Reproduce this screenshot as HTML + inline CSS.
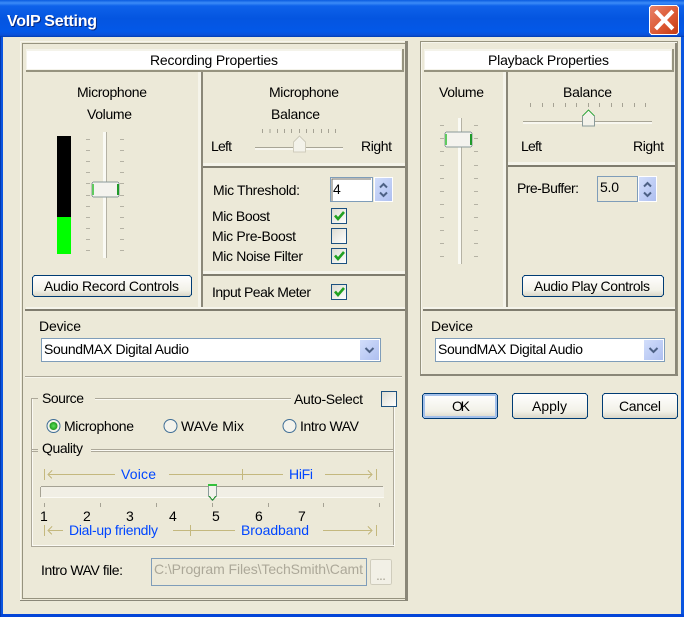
<!DOCTYPE html>
<html><head><meta charset="utf-8"><title>VoIP Setting</title>
<style>
html,body{margin:0;padding:0;background:#ece9d8;width:684px;height:617px;overflow:hidden}
svg{display:block}
text{font-family:"Liberation Sans",sans-serif;font-size:14px;fill:#000}
.b{fill:#0046ff}
.g{fill:#aca899}
</style></head><body>
<svg width="684" height="617" viewBox="0 0 684 617" xmlns="http://www.w3.org/2000/svg" shape-rendering="crispEdges">
<defs>
<linearGradient id="tb" x1="0" y1="0" x2="0" y2="1">
<stop offset="0" stop-color="#0a5be0"/><stop offset=".08" stop-color="#3c8cf8"/><stop offset=".16" stop-color="#0e62ea"/><stop offset=".5" stop-color="#0455e0"/><stop offset=".85" stop-color="#0358e8"/><stop offset=".95" stop-color="#0a50d8"/><stop offset="1" stop-color="#003cb0"/>
</linearGradient>
<linearGradient id="cb" x1="0" y1="0" x2="1" y2="1"><stop offset="0" stop-color="#dcdbd0"/><stop offset="1" stop-color="#fff"/></linearGradient>
<linearGradient id="btn" x1="0" y1="0" x2="0" y2="1"><stop offset="0" stop-color="#fff"/><stop offset=".7" stop-color="#f2f1e8"/><stop offset="1" stop-color="#d8d5c6"/></linearGradient>
<linearGradient id="sp" x1="0" y1="0" x2="1" y2="1"><stop offset="0" stop-color="#d2defb"/><stop offset="1" stop-color="#aebff0"/></linearGradient>
<linearGradient id="cl" x1="0" y1="0" x2="1" y2="1"><stop offset="0" stop-color="#e8836a"/><stop offset=".6" stop-color="#db5630"/><stop offset="1" stop-color="#c23a12"/></linearGradient>
<radialGradient id="rd"><stop offset="0" stop-color="#5ee05e"/><stop offset="1" stop-color="#1c9a1c"/></radialGradient>
</defs>

<!-- window -->
<rect width="684" height="617" fill="#ece9d8"/>
<rect width="684" height="37" fill="url(#tb)"/>
<rect x="0" y="37" width="3" height="580" fill="#0a55e0"/>
<rect x="681" y="37" width="3" height="580" fill="#0a55e0"/>
<rect x="0" y="614" width="684" height="3" fill="#0345d8"/>
<rect x="0" y="37" width="1" height="580" fill="#0339b0"/>
<text x="8" y="27" textLength="90" style="font-size:16px;font-weight:bold;fill:#0a2a80">VoIP Setting</text>
<text x="7" y="26" textLength="90" style="font-size:16px;font-weight:bold;fill:#fff">VoIP Setting</text>

<!-- close -->
<rect x="649.500" y="5.500" width="29" height="29" rx="3" fill="url(#cl)" stroke="#fff"/>
<path d="M657 12.500 L671.500 27.500 M671.500 12.500 L657 27.500" stroke="#fff" stroke-width="4" stroke-linecap="square" shape-rendering="auto"/>

<!-- left panel frame -->
<rect x="20.500" y="41.500" width="387" height="559" fill="none" stroke="#f6f5ec"/>
<rect x="22.500" y="43.500" width="383" height="555" fill="none" stroke="#96937f" stroke-width="1"/>
<rect x="405" y="41" width="3" height="560" fill="#8a8778"/>
<rect x="20" y="600" width="388" height="1" fill="#8a8778"/>
<!-- title box -->
<rect x="26" y="49" width="378" height="23" fill="#96937f"/>
<rect x="26" y="49" width="376" height="21" fill="#f4f3ea"/>
<rect x="27" y="51" width="374" height="18" fill="#fff"/>
<text x="150" y="65" textLength="128">Recording Properties</text>

<!-- left inner dividers -->
<rect x="198" y="72" width="3" height="235" fill="#f5f4ea"/>
<rect x="201" y="72" width="2" height="236" fill="#8a8778"/>
<rect x="203" y="163" width="202" height="3" fill="#f5f4ea"/>
<rect x="203" y="166" width="202" height="2" fill="#7f7c6e"/>
<rect x="203" y="271" width="202" height="3" fill="#f5f4ea"/>
<rect x="203" y="274" width="202" height="2" fill="#7f7c6e"/>
<rect x="26" y="307" width="379" height="2" fill="#f5f4ea"/>
<rect x="25" y="309" width="380" height="2" fill="#7f7c6e"/>

<text x="77" y="97" textLength="70">Microphone</text>
<text x="87" y="119" textLength="45">Volume</text>
<!-- meter -->
<rect x="57" y="136" width="14" height="81" fill="#000"/>
<rect x="57" y="217" width="14" height="37" fill="#00ff00"/>
<!-- vertical slider -->
<rect x="103" y="132" width="3" height="126" fill="#fafaf4"/>
<rect x="106" y="132" width="1" height="126" fill="#b5b2a4"/>
<path d="M86 139.500h4M86 150.500h4M86 161.500h4M86 172.500h4M86 183.500h4M86 195.500h4M86 206.500h4M86 217.500h4M86 228.500h4M86 239.500h4M86 250.500h4M120 139.500h4M120 150.500h4M120 161.500h4M120 172.500h4M120 183.500h4M120 195.500h4M120 206.500h4M120 217.500h4M120 228.500h4M120 239.500h4M120 250.500h4" stroke="#b5b2a4"/>
<rect x="92" y="182" width="27" height="15" rx="2" fill="#f4f3ee" stroke="#8a9a9a"/>
<rect x="92" y="184" width="2" height="11" fill="#5fca5f"/>
<rect x="117" y="184" width="2" height="11" fill="#1f9a2a"/>

<!-- Audio Record Controls -->
<rect x="32.500" y="275.500" width="159" height="21" rx="3" fill="url(#btn)" stroke="#003c74"/>
<text x="44" y="291" textLength="135">Audio Record Controls</text>

<!-- mic balance -->
<text x="269" y="97" textLength="70">Microphone</text>
<text x="271" y="119" textLength="49">Balance</text>
<text x="211" y="151" textLength="21">Left</text>
<text x="361" y="151" textLength="31">Right</text>
<path d="M262.500 129v4M270 129v4M277.500 129v4M284.500 129v4M291.500 129v4M299.500 129v4M306.500 129v4M313.500 129v4M321.500 129v4M328.500 129v4M335.500 129v4" stroke="#a5a294"/>
<rect x="255" y="147" width="88" height="1" fill="#a8a596"/>
<rect x="255" y="148" width="88" height="2" fill="#f8f7f0"/>
<path d="M293.500 152V142L299.500 136L305.500 142V152Z" fill="#f3f2ea" stroke="#cfccbc"/>

<text x="213" y="195" textLength="87">Mic Threshold:</text>
<rect x="330.500" y="177.500" width="42" height="24" fill="#fff" stroke="#7f9db9"/>
<path d="M332 201V179H371" fill="none" stroke="#716f64" stroke-width="1"/>
<text x="333" y="194" textLength="8">4</text>
<rect x="374" y="177" width="19" height="25" fill="#fff"/>
<rect x="375" y="178" width="17" height="23" fill="url(#sp)"/>
<path d="M380 187.500l3.500-3.500 3.500 3.500M380 192.500l3.500 3.500 3.500-3.500" fill="none" stroke="#4d6185" stroke-width="2" shape-rendering="auto"/>

<text x="212" y="221" textLength="58">Mic Boost</text>
<text x="212" y="241" textLength="84">Mic Pre-Boost</text>
<text x="212" y="261" textLength="91">Mic Noise Filter</text>
<text x="212" y="297" textLength="99">Input Peak Meter</text>

<g id="checks">
<rect x="331.500" y="208.500" width="15" height="15" fill="url(#cb)" stroke="#1c5180"/>
<path d="M335 215.500l3 3.500 6-7" fill="none" stroke="#21a121" stroke-width="2.600" shape-rendering="auto"/>
<rect x="331.500" y="228.500" width="15" height="15" fill="url(#cb)" stroke="#1c5180"/>
<rect x="331.500" y="248.500" width="15" height="15" fill="url(#cb)" stroke="#1c5180"/>
<path d="M335 255.500l3 3.500 6-7" fill="none" stroke="#21a121" stroke-width="2.600" shape-rendering="auto"/>
<rect x="331.500" y="284.500" width="15" height="15" fill="url(#cb)" stroke="#1c5180"/>
<path d="M335 291.500l3 3.500 6-7" fill="none" stroke="#21a121" stroke-width="2.600" shape-rendering="auto"/>
</g>

<!-- device left -->
<text x="39" y="331" textLength="42">Device</text>
<rect x="41.500" y="338.500" width="339" height="23" fill="#fff" stroke="#7f9db9"/>
<text x="44" y="354" textLength="145">SoundMAX Digital Audio</text>
<rect x="360" y="340" width="19" height="20" fill="url(#sp)"/>
<path d="M365.500 348l4 4 4-4" fill="none" stroke="#4d6185" stroke-width="2" shape-rendering="auto"/>

<rect x="25" y="376" width="377" height="1" fill="#aca899"/>
<rect x="25" y="377" width="377" height="1" fill="#f6f5ec"/>

<!-- source group -->
<path d="M38 398.500H31.500V546.500H393.500V407" fill="none" stroke="#aca899"/>
<path d="M32.500 399V545.500H394.500V407" fill="none" stroke="#fbfaf4"/>
<path d="M95 398.500H291" stroke="#aca899"/>
<path d="M95 399.500H291" stroke="#fbfaf4"/>
<text x="42" y="403" textLength="42">Source</text>
<text x="294" y="404" textLength="69">Auto-Select</text>
<rect x="381.500" y="391.500" width="15" height="15" fill="url(#cb)" stroke="#1c5180"/>

<g shape-rendering="auto">
<circle cx="53.500" cy="426" r="6.500" fill="#f4f3ec" stroke="#3f6e96"/>
<circle cx="53.500" cy="426" r="4" fill="url(#rd)"/>
<circle cx="170.500" cy="426" r="6.500" fill="#f4f3ec" stroke="#3f6e96"/>
<circle cx="289.500" cy="426" r="6.500" fill="#f4f3ec" stroke="#3f6e96"/>
</g>
<text x="64" y="431" textLength="70">Microphone</text>
<text x="181" y="431" textLength="63">WAVe Mix</text>
<text x="300" y="431" textLength="59">Intro WAV</text>

<!-- quality -->
<rect x="32" y="449" width="6" height="1" fill="#aca899"/><rect x="32" y="451" width="6" height="1" fill="#aca899"/>
<rect x="91" y="449" width="302" height="1" fill="#aca899"/><rect x="91" y="451" width="302" height="1" fill="#aca899"/>
<rect x="91" y="450" width="302" height="1" fill="#fbfaf4"/>
<text x="42" y="453" textLength="41">Quality</text>

<g fill="none" stroke="#c4b87e">
<path d="M44.500 469v11M115 474.500H48M52 470.500l-4 4 4 4"/>
<path d="M169 474.500H283M242.500 469v11M325 474.500H372M368 470.500l4 4-4 4M376.500 469v11"/>
<path d="M44.500 525v11M63 530.500H48M52 526.500l-4 4 4 4"/>
<path d="M173 530.500H235M190.500 525v11M323 530.500H372M368 526.500l4 4-4 4M376.500 525v11"/>
</g>
<text class="b" x="121" y="479" textLength="35">Voice</text>
<text class="b" x="289" y="479" textLength="24">HiFi</text>
<text class="b" x="69" y="535" textLength="89">Dial-up friendly</text>
<text class="b" x="241" y="535" textLength="68">Broadband</text>

<!-- hslider -->
<rect x="40" y="486" width="344" height="12" rx="2" fill="#f1efe5"/>
<rect x="41" y="486" width="342" height="1" fill="#a5a294"/>
<rect x="40" y="487" width="1" height="10" fill="#a5a294"/>
<rect x="41" y="497" width="343" height="1" fill="#fbfaf4"/>
<path d="M44.500 503v4M100.500 503v4M156.500 503v4M212.500 503v4M268.500 503v4M323.500 503v4M379.500 503v4" stroke="#a5a294"/>
<path d="M208.500 484.500H216.500V496L212.500 500.500L208.500 496Z" fill="#f3f2ec" stroke="#8a9a9a"/>
<rect x="208" y="484" width="9" height="2" fill="#34c03c"/>
<path d="M209 496l3.500 4 3.500-4" fill="none" stroke="#2a9a34"/>
<text x="40" y="521">1</text><text x="83" y="521">2</text><text x="126" y="521">3</text><text x="169" y="521">4</text><text x="212" y="521">5</text><text x="255" y="521">6</text><text x="298" y="521">7</text>

<!-- intro wav -->
<text x="41" y="575" textLength="82">Intro WAV file:</text>
<rect x="151.500" y="558.500" width="215" height="27" fill="#ece9d8" stroke="#7f9db9"/>
<text class="g" x="154" y="574" textLength="209">C:\Program Files\TechSmith\Camt</text>
<rect x="370.500" y="559.500" width="21" height="25" rx="2" fill="#f2f0e6" stroke="#cfccbc"/>
<text class="g" x="376" y="580" textLength="10">...</text>

<!-- right panel -->
<rect x="420.500" y="41.500" width="257" height="334" fill="none" stroke="#96937f"/>
<rect x="421.500" y="42.500" width="255" height="332" fill="none" stroke="#f6f5ec"/>
<rect x="675" y="43" width="2" height="332" fill="#8a8778"/>
<rect x="420" y="374" width="258" height="2" fill="#8a8778"/>
<rect x="424" y="49" width="250" height="23" fill="#96937f"/>
<rect x="424" y="49" width="248" height="21" fill="#f4f3ea"/>
<rect x="425" y="51" width="246" height="18" fill="#fff"/>
<text x="488" y="65" textLength="121">Playback Properties</text>

<rect x="503" y="72" width="3" height="235" fill="#f5f4ea"/>
<rect x="506" y="72" width="2" height="236" fill="#8a8778"/>
<rect x="508" y="162" width="167" height="3" fill="#f5f4ea"/>
<rect x="508" y="165" width="167" height="2" fill="#7f7c6e"/>
<rect x="423" y="307" width="252" height="2" fill="#f5f4ea"/>
<rect x="423" y="309" width="252" height="2" fill="#7f7c6e"/>

<text x="439" y="97" textLength="45">Volume</text>
<rect x="458" y="118" width="3" height="146" fill="#fafaf4"/>
<rect x="461" y="118" width="1" height="146" fill="#b5b2a4"/>
<path d="M440 125.500h4M440 138.500h4M440 151.500h4M440 165.500h4M440 178.500h4M440 191.500h4M440 204.500h4M440 217.500h4M440 230.500h4M440 243.500h4M440 256.500h4M474 125.500h4M474 138.500h4M474 151.500h4M474 165.500h4M474 178.500h4M474 191.500h4M474 204.500h4M474 217.500h4M474 230.500h4M474 243.500h4M474 256.500h4" stroke="#b5b2a4"/>
<rect x="445" y="132" width="27" height="15" rx="2" fill="#f4f3ee" stroke="#8a9a9a"/>
<rect x="445" y="134" width="2" height="11" fill="#5fca5f"/>
<rect x="470" y="134" width="2" height="11" fill="#1f9a2a"/>

<text x="563" y="97" textLength="49">Balance</text>
<path d="M530.500 103v4M542.500 103v4M553.500 103v4M565.500 103v4M576.500 103v4M588.500 103v4M599.500 103v4M611.500 103v4M622.500 103v4M634.500 103v4M645.500 103v4" stroke="#a5a294"/>
<rect x="523" y="121" width="129" height="1" fill="#a8a596"/>
<rect x="523" y="122" width="129" height="2" fill="#f8f7f0"/>
<path d="M582.500 126V116L588.500 110L594.500 116V126Z" fill="#f3f2ea" stroke="#8a9a9a"/>
<path d="M582.500 116L588.500 110L594.500 116" fill="none" stroke="#3aaa44"/>
<text x="521" y="151" textLength="21">Left</text>
<text x="633" y="151" textLength="31">Right</text>

<text x="517" y="193" textLength="62">Pre-Buffer:</text>
<rect x="597.500" y="176.500" width="40" height="25" fill="#ece9d8" stroke="#7f9db9"/>
<text x="600" y="192" textLength="19">5.0</text>
<rect x="638" y="176" width="19" height="26" fill="#fff"/>
<rect x="639" y="177" width="17" height="24" fill="url(#sp)"/>
<path d="M644 186.500l3.500-3.500 3.500 3.500M644 192.500l3.500 3.500 3.500-3.500" fill="none" stroke="#4d6185" stroke-width="2" shape-rendering="auto"/>

<rect x="522.500" y="275.500" width="141" height="21" rx="3" fill="url(#btn)" stroke="#003c74"/>
<text x="534" y="291" textLength="116">Audio Play Controls</text>

<text x="431" y="331" textLength="42">Device</text>
<rect x="435.500" y="338.500" width="229" height="23" fill="#fff" stroke="#7f9db9"/>
<text x="438" y="354" textLength="145">SoundMAX Digital Audio</text>
<rect x="644" y="340" width="19" height="20" fill="url(#sp)"/>
<path d="M649.500 348l4 4 4-4" fill="none" stroke="#4d6185" stroke-width="2" shape-rendering="auto"/>

<!-- dialog buttons -->
<rect x="422.500" y="393.500" width="75" height="25" rx="3" fill="url(#btn)" stroke="#003c74"/>
<rect x="424" y="395" width="72" height="22" rx="1" fill="none" stroke="#a3c0ea" stroke-width="2"/>
<text x="452" y="411" textLength="18">OK</text>
<rect x="512.500" y="393.500" width="75" height="25" rx="3" fill="url(#btn)" stroke="#003c74"/>
<text x="532" y="411" textLength="35">Apply</text>
<rect x="602.500" y="393.500" width="75" height="25" rx="3" fill="url(#btn)" stroke="#003c74"/>
<text x="619" y="411" textLength="42">Cancel</text>
</svg>
</body></html>
